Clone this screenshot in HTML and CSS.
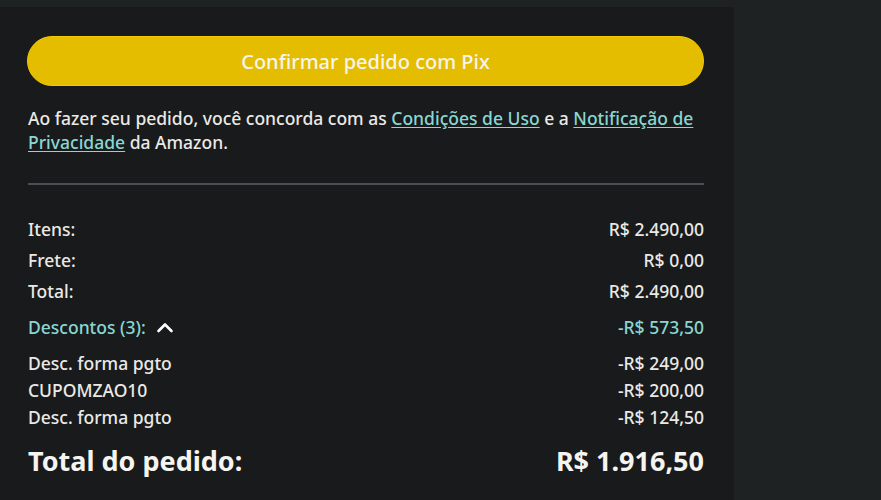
FILE: index.html
```html
<!DOCTYPE html>
<html lang="pt-BR">
<head>
<meta charset="utf-8">
<link rel="stylesheet" href="styles.css">
</head>
<body>
<div class="panel">
  <button class="pix-btn">Confirmar pedido com Pix</button>
  <p class="terms">Ao fazer seu pedido, você concorda com as <a href="#">Condições de Uso</a> e a <a href="#">Notificação de Privacidade</a> da Amazon.</p>
  <hr class="divider">
  <div class="rows">
    <div class="row"><span>Itens:</span><span>R$ 2.490,00</span></div>
    <div class="row"><span>Frete:</span><span>R$ 0,00</span></div>
    <div class="row"><span>Total:</span><span>R$ 2.490,00</span></div>
  </div>
  <div class="row discount-head">
    <span class="disc-label">Descontos (3):
      <svg class="chev" width="18" height="11" viewBox="0 0 18 11"><path d="M2.5 9 L9 2.5 L15.5 9" fill="none" stroke="#ffffff" stroke-width="2.6" stroke-linecap="round" stroke-linejoin="round"/></svg>
    </span>
    <span>-R$ 573,50</span>
  </div>
  <div class="sub-rows">
    <div class="row sub"><span>Desc. forma pgto</span><span>-R$ 249,00</span></div>
    <div class="row sub"><span>CUPOMZAO10</span><span>-R$ 200,00</span></div>
    <div class="row sub"><span>Desc. forma pgto</span><span>-R$ 124,50</span></div>
  </div>
  <div class="row grand"><span>Total do pedido:</span><span>R$ 1.916,50</span></div>
</div>
</body>
</html>
```

FILE: styles.css
```css
html, body {
  margin: 0;
  padding: 0;
  background: #1f2223;
  height: 100%;
  overflow: hidden;
}
body {
  padding-top: 7px;
  font-family: "Noto Sans", "Open Sans", sans-serif;
  font-weight: 500;
  color: #ebe9e6;
}
.panel {
  width: 734px;
  height: 493px;
  background: #181a1b;
  box-sizing: border-box;
  padding: 29px 30px 0 28px;
}
.pix-btn {
  display: block;
  width: 677px;
  height: 50px;
  border-radius: 25px;
  background: #e5bd00;
  border: 1px solid #f2c800;
  color: #f6f4f0;
  font-family: inherit;
  font-weight: 500;
  font-size: 20px;
  padding: 0;
  margin: 0 0 0 -1px;
}
.terms {
  margin: 20px 0 0;
  font-size: 17.5px;
  line-height: 24px;
  width: 690px;
}
.terms a {
  color: #8ad6d2;
  text-decoration: underline;
  text-underline-offset: 2px;
}
.divider {
  border: none;
  height: 2px;
  background: #4a4f52;
  margin: 29px 0 0;
  width: 676px;
}
.rows {
  margin-top: 33px;
  display: flex;
  flex-direction: column;
  gap: 9px;
}
.row {
  display: flex;
  justify-content: space-between;
  align-items: center;
  width: 676px;
  font-size: 17.5px;
  line-height: 22px;
}
.discount-head {
  margin-top: 14px;
  color: #8ad6d2;
}
.disc-label {
  display: flex;
  align-items: center;
  gap: 10px;
}
.chev {
  display: block;
}
.sub-rows {
  margin-top: 14px;
  display: flex;
  flex-direction: column;
  gap: 5px;
}
.grand {
  margin-top: 17px;
  font-size: 27px;
  font-weight: 700;
  line-height: 32px;
  color: #f6f4f0;
}
```
